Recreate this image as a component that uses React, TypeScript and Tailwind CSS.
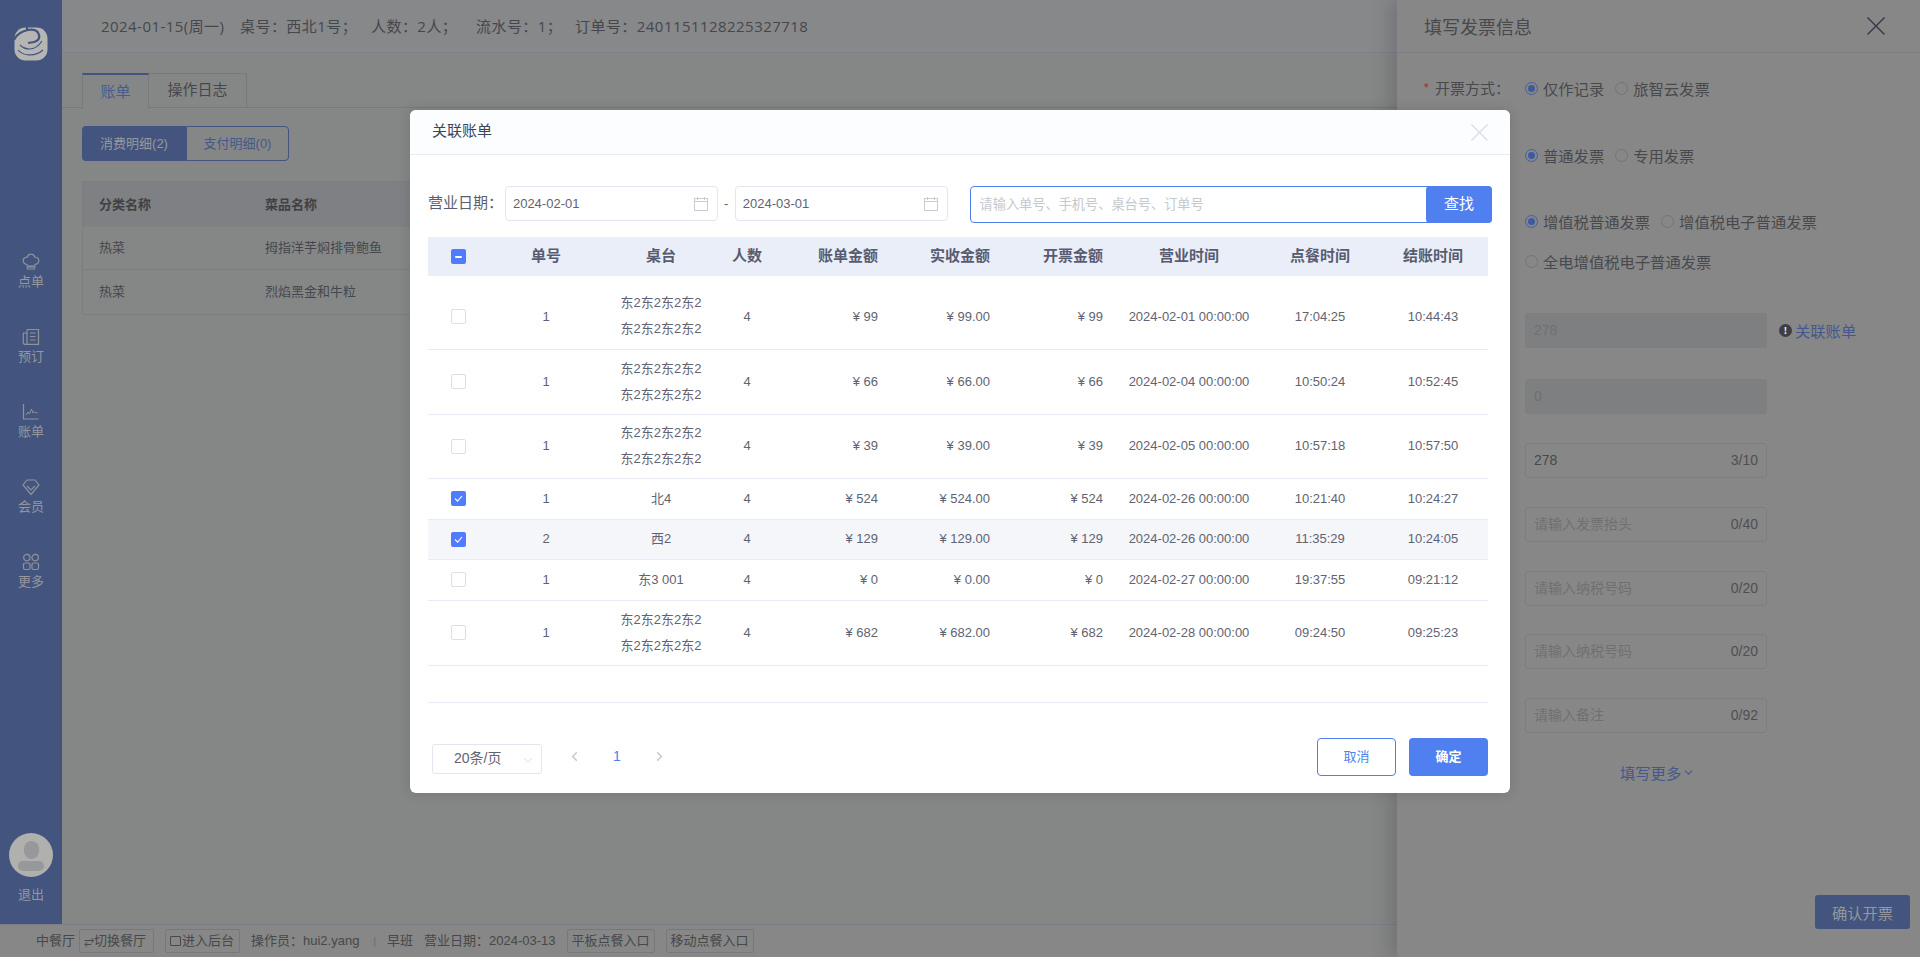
import React from 'react';
import { ChevronDown, ChevronLeft, ChevronRight } from 'lucide-react';

interface Bill {
  no: number;
  table: string[];
  amount: string;
  received: string;
  bizTime: string;
  orderTime: string;
  payTime: string;
  rowClass: string;
  checked?: boolean;
  active?: boolean;
}

const east = '东2东2东2东2';

const bills: Bill[] = [
  { no: 1, table: [east, east], amount: '99', received: '99.00', bizTime: '2024-02-01 00:00:00', orderTime: '17:04:25', payTime: '10:44:43', rowClass: 'h-[73px]' },
  { no: 1, table: [east, east], amount: '66', received: '66.00', bizTime: '2024-02-04 00:00:00', orderTime: '10:50:24', payTime: '10:52:45', rowClass: 'h-[65px]' },
  { no: 1, table: [east, east], amount: '39', received: '39.00', bizTime: '2024-02-05 00:00:00', orderTime: '10:57:18', payTime: '10:57:50', rowClass: 'h-[64px]' },
  { no: 1, table: ['北4'], amount: '524', received: '524.00', bizTime: '2024-02-26 00:00:00', orderTime: '10:21:40', payTime: '10:24:27', rowClass: 'h-[41px]', checked: true },
  { no: 2, table: ['西2'], amount: '129', received: '129.00', bizTime: '2024-02-26 00:00:00', orderTime: '11:35:29', payTime: '10:24:05', rowClass: 'h-[40px]', checked: true, active: true },
  { no: 1, table: ['东3 001'], amount: '0', received: '0.00', bizTime: '2024-02-27 00:00:00', orderTime: '19:37:55', payTime: '09:21:12', rowClass: 'h-[41px]' },
  { no: 1, table: [east, east], amount: '682', received: '682.00', bizTime: '2024-02-28 00:00:00', orderTime: '09:24:50', payTime: '09:25:23', rowClass: 'h-[65px]' },
];

function Logo() {
  return (
    <svg width="34" height="34" viewBox="0 0 34 34" fill="none">
      <rect x="0.5" y="0.5" width="33" height="33" rx="11" fill="#b5b5b3" />
      <path d="M13 -1v5M0 13C3 7 8 4 14 3c6-1 10 1 11 5 1 4-2 6-5 7l-6 1" stroke="#43557f" strokeWidth="2.2" />
      <path d="M4 23c4 5 16 8 25 0M6 18c4 4 14 8 22-4" stroke="#43557f" strokeWidth="1.2" />
    </svg>
  );
}

function NavIcon({ name }: { name: string }) {
  const common = { width: 18, height: 18, viewBox: '0 0 18 18', fill: 'none', stroke: '#8f9399', strokeWidth: 1.2 };
  if (name === 'hat') {
    return (
      <svg {...common}>
        <path d="M5 11.5C2.8 11 1.2 9.5 1.2 7.5 1.2 5.4 3 4 5 4.3 5.6 2.4 7.2 1.2 9 1.2s3.4 1.2 4 3.1c2-.3 3.8 1.1 3.8 3.2 0 2-1.6 3.5-3.8 4L12.5 16h-7L5 11.5Z" />
        <path d="M6 13.5h6" strokeWidth="2" />
      </svg>
    );
  }
  if (name === 'book') {
    return (
      <svg {...common}>
        <path d="M5 1.5h11.5v14.8H3c-1 0-1.7-.7-1.7-1.7V5H5" />
        <path d="M5 1.5v14.8M8 5h5.5M8 8.5h5.5M8 12h5.5" />
      </svg>
    );
  }
  if (name === 'chart') {
    return (
      <svg {...common}>
        <path d="M1.5 1v15h15" />
        <path d="M4 12l2-3 1.5 2 2-5 1.5 4 1.5-1 3 1" strokeWidth="1" />
      </svg>
    );
  }
  if (name === 'gem') {
    return (
      <svg {...common}>
        <path d="M5 2h8l4 5-8 9.5L1 7l4-5Z" />
        <path d="M5 8l4 4 4-4" />
      </svg>
    );
  }
  return (
    <svg {...common}>
      <circle cx="4.8" cy="4.6" r="3.2" />
      <circle cx="13.2" cy="4.6" r="3.2" />
      <rect x="1.5" y="10" width="6.5" height="6.5" rx="1.5" />
      <rect x="10" y="10" width="6.5" height="6.5" rx="1.5" />
    </svg>
  );
}

function CloseIcon({ size, color, width }: { size: number; color: string; width: number }) {
  return (
    <svg width={size} height={size} viewBox="0 0 18 18" fill="none" stroke={color} strokeWidth={width}>
      <path d="M0.5 0.5l17 17M17.5 0.5l-17 17" />
    </svg>
  );
}

function Sidebar() {
  const items = [
    { icon: 'hat', label: '点单' },
    { icon: 'book', label: '预订' },
    { icon: 'chart', label: '账单' },
    { icon: 'gem', label: '会员' },
    { icon: 'grid', label: '更多' },
  ];
  return (
    <aside className="w-[62px] shrink-0 bg-[#43557f] flex flex-col items-center text-[13px] text-[#94979c]">
      <div className="mt-[27px]">
        <Logo />
      </div>
      <nav className="mt-[192px] flex flex-col items-center gap-[31px]">
        {items.map((it) => (
          <div key={it.label} className="h-[44px] flex flex-col items-center">
            <NavIcon name={it.icon} />
            <span className="mt-[1px] leading-[20px]">{it.label}</span>
          </div>
        ))}
      </nav>
      <div className="mt-auto mb-[19px] flex flex-col items-center">
        <div className="w-[44px] h-[44px] rounded-full bg-[#b0b0af] flex flex-col items-center overflow-hidden">
          <div className="mt-[8px] w-[15px] h-[18px] rounded-full bg-[#979899]" />
          <div className="mt-[2px] w-[26px] h-[10px] rounded-full bg-[#979899]" />
        </div>
        <span className="mt-[8px] leading-[20px]">退出</span>
      </div>
    </aside>
  );
}

function BackPage() {
  return (
    <main className="flex-1 min-w-0 flex flex-col bg-[#858786] text-[#46474d]">
      <header className="h-[53px] shrink-0 flex items-center pl-[39px] text-[15px] tracking-[0.45px] border-b border-[#7f8189] bg-[#87888a] font-['Open_Sans','Noto_Sans_CJK_SC',sans-serif]">
        <span className="w-[139px]">2024-01-15(周一)</span>
        <span className="w-[131px]">桌号：西北1号；</span>
        <span className="w-[105px]">人数：2人；</span>
        <span className="w-[99px]">流水号：1；</span>
        <span>订单号：2401151128225327718</span>
      </header>
      <div className="px-[20px] pt-[20px]">
        <div className="flex h-[35px] text-[15px] border-b border-[#78797c] -mx-[20px] px-[20px]">
          <div className="w-[67px] h-[36px] border-t-2 border-[#43557f] border-l border-r border-l-[#78797c] border-r-[#78797c] bg-[#858786] text-[#4a5b8f] flex items-center justify-center">账单</div>
          <div className="w-[98px] border-t border-r border-[#78797c] flex items-center justify-center">操作日志</div>
        </div>
        <div className="mt-[18px] flex w-[207px] h-[35px] text-[13px]">
          <div className="w-[104px] rounded-l-[4px] bg-[#43557f] text-[#969899] flex items-center justify-center">消费明细(2)</div>
          <div className="flex-1 rounded-r-[4px] border border-[#43557f] text-[#46588a] flex items-center justify-center">支付明细(0)</div>
        </div>
        <div className="mt-[20px] border border-[#7b7d80] rounded-[2px] text-[13px]">
          <div className="h-[45px] bg-[#7e8083] flex items-center font-bold text-[#3f4044]">
            <span className="w-[182px] pl-[16px]">分类名称</span>
            <span>菜品名称</span>
          </div>
          <div className="h-[43px] border-b border-[#7b7d80] flex items-center">
            <span className="w-[182px] pl-[16px]">热菜</span>
            <span>拇指洋芋焖排骨鲍鱼</span>
          </div>
          <div className="h-[44px] flex items-center">
            <span className="w-[182px] pl-[16px]">热菜</span>
            <span>烈焰黑金和牛粒</span>
          </div>
        </div>
      </div>
    </main>
  );
}

function BottomBar() {
  const btn = 'h-[24px] px-[4px] border border-[#77787b] rounded-[2px] flex items-center';
  return (
    <footer className="h-[33px] shrink-0 border-t border-[#7c7e85] bg-[#868786] flex items-center pl-[36px] text-[13px] text-[#47484b] font-['Liberation_Sans','Noto_Sans_CJK_SC',sans-serif]">
      <span>中餐厅</span>
      <div className={`${btn} ml-[4px] w-[75px]`}>⥂切换餐厅</div>
      <div className={`${btn} ml-[11px] w-[75px]`}>
        <span className="w-[11px] h-[10px] border border-[#47484b] rounded-[1px] mr-[1px]" />进入后台
      </div>
      <span className="ml-[11px]">操作员：hui2.yang</span>
      <span className="ml-[14px] text-[10px] text-[#6c6d70]">|</span>
      <span className="ml-[11px]">早班</span>
      <span className="ml-[11px]">营业日期：2024-03-13</span>
      <div className={`${btn} ml-[11px] w-[88px]`}>平板点餐入口</div>
      <div className={`${btn} ml-[11px] w-[88px]`}>移动点餐入口</div>
    </footer>
  );
}

function Radio({ checked, label }: { checked?: boolean; label: string }) {
  return (
    <span className="flex items-center">
      <span className={`w-[13px] h-[13px] rounded-full border flex items-center justify-center ${checked ? 'border-[#43609f]' : 'border-[#737477]'}`}>
        {checked && <span className="w-[7px] h-[7px] rounded-full bg-[#3f5a9c]" />}
      </span>
      <span className="ml-[5px]">{label}</span>
    </span>
  );
}

function FieldBox({ value, placeholder, count, disabled, className }: { value?: string; placeholder?: string; count?: string; disabled?: boolean; className?: string }) {
  return (
    <div className={`w-[242px] h-[35px] rounded-[3px] border border-[#7d7e80] px-[8px] flex items-center justify-between text-[14px] font-['Liberation_Sans','Noto_Sans_CJK_SC',sans-serif] ${disabled ? 'bg-[#7e7f81]' : ''} ${className ?? ''}`}>
      <span className={disabled || placeholder ? 'text-[#6f7072]' : 'text-[#47484b]'}>{value ?? placeholder}</span>
      {count && <span className="text-[#4e4f53]">{count}</span>}
    </div>
  );
}

function InvoiceDrawer() {
  return (
    <section className="absolute right-0 top-0 bottom-0 w-[523px] bg-[#878787] text-[15.3px] text-[#48494c] shadow-[-8px_0_16px_rgba(60,62,70,0.25)] font-['Noto_Sans_CJK_SC',sans-serif]">
      <div className="h-[53px] border-b border-[#7d7e85] pl-[27px] pr-[35px] flex items-center justify-between">
        <span className="text-[18px]">填写发票信息</span>
        <CloseIcon size={18} color="#35364a" width={1.4} />
      </div>
      <div className="pl-[26px] pt-[24px]">
        <div className="flex items-center h-[22px]">
          <span className="w-[12px] text-[#9c3b30] text-[14px]">*</span>
          <span className="w-[90px] text-[15px]">开票方式：</span>
          <div className="flex gap-[11px]">
            <Radio checked label="仅作记录" />
            <Radio label="旅智云发票" />
          </div>
        </div>
        <div className="flex gap-[11px] ml-[102px] mt-[45px] h-[22px] items-center">
          <Radio checked label="普通发票" />
          <Radio label="专用发票" />
        </div>
        <div className="flex gap-[11px] ml-[102px] mt-[44px] h-[22px] items-center">
          <Radio checked label="增值税普通发票" />
          <Radio label="增值税电子普通发票" />
        </div>
        <div className="flex ml-[102px] mt-[18px] h-[22px] items-center">
          <Radio label="全电增值税电子普通发票" />
        </div>
        <div className="ml-[102px] mt-[41px] flex items-center">
          <FieldBox value="278" disabled />
          <span className="ml-[12px] w-[13px] h-[13px] rounded-full bg-[#3e3f45] text-white text-[9px] font-bold flex items-center justify-center">!</span>
          <span className="ml-[3px] text-[#45578c]">关联账单</span>
        </div>
        <div className="ml-[102px]">
          <FieldBox value="0" disabled className="mt-[31px]" />
          <FieldBox value="278" count="3/10" className="mt-[29px]" />
          <FieldBox placeholder="请输入发票抬头" count="0/40" className="mt-[29px]" />
          <FieldBox placeholder="请输入纳税号码" count="0/20" className="mt-[29px]" />
          <FieldBox placeholder="请输入纳税号码" count="0/20" className="mt-[28px]" />
          <FieldBox placeholder="请输入备注" count="0/92" className="mt-[29px]" />
          <div className="mt-[28px] pl-[95px] flex items-center text-[#45578c]">
            填写更多<ChevronDown size={13} className="ml-[1px]" />
          </div>
        </div>
      </div>
      <div className="absolute right-[10px] bottom-[28px] w-[95px] h-[34px] rounded-[3px] bg-[#43557f] text-[#95979a] flex items-center justify-center">确认开票</div>
    </section>
  );
}

function Check({ state }: { state?: 'on' | 'some' }) {
  if (!state) return <span className="block mx-auto w-[15px] h-[15px] rounded-[2px] border border-[#dcdfe6] bg-white" />;
  return (
    <span className="mx-auto w-[15px] h-[15px] rounded-[2px] bg-[#4f7cff] flex items-center justify-center">
      {state === 'some' ? (
        <span className="w-[7px] h-[2px] bg-white rounded-[1px]" />
      ) : (
        <svg width="11" height="11" viewBox="0 0 11 11" fill="none" stroke="#fff" strokeWidth="1.1">
          <path d="M2 5.5l2.6 2.6L9 3" />
        </svg>
      )}
    </span>
  );
}

function DateBox({ value }: { value: string }) {
  return (
    <div className="w-[213px] h-[35px] rounded-[4px] border border-[#e3e6ee] pl-[7px] pr-[9px] flex items-center justify-between text-[13px]">
      <span>{value}</span>
      <svg width="14" height="14" viewBox="0 0 14 14" fill="none" stroke="#c9ccd4">
        <rect x="0.5" y="1.5" width="13" height="12" />
        <path d="M0.5 4.5h13M3.5 0v3M10.5 0v3" />
      </svg>
    </div>
  );
}

function BillModal() {
  const th = 'font-bold text-[15px] text-[#585c70] px-0';
  return (
    <section className="absolute left-[410px] top-[110px] w-[1100px] h-[683px] rounded-[6px] bg-white text-[#5f6372] shadow-[0_0_12px_rgba(50,52,60,0.2)] font-['Liberation_Sans','Noto_Sans_CJK_SC',sans-serif]">
      <div className="h-[45px] rounded-t-[6px] bg-[#fcfdff] border-b border-[#e9edf3] pl-[22px] pr-[22px] flex items-center justify-between">
        <span className="text-[15px] text-[#40435a] -mt-[2px]">关联账单</span>
        <CloseIcon size={17} color="#d9dce6" width={1.3} />
      </div>
      <div className="pl-[18px] pr-[18px] pt-[31px]">
        <div className="flex items-start h-[36px]">
          <span className="w-[77px] h-[35px] flex items-center text-[15px] text-[#5a5e6d] whitespace-nowrap">营业日期：</span>
          <DateBox value="2024-02-01" />
          <span className="w-[17px] h-[35px] flex items-center justify-center text-[13px]">-</span>
          <DateBox value="2024-03-01" />
          <div className="ml-[22px] w-[523px] h-[37px] rounded-[4px] border border-[#4f7fef] flex items-center">
            <span className="flex-1 pl-[9px] text-[13.2px] text-[#c5c8cf]">请输入单号、手机号、桌台号、订单号</span>
            <div className="w-[66px] h-[37px] -mr-px rounded-[4px] bg-[#5080ef] text-white text-[15px] flex items-center justify-center">查找</div>
          </div>
        </div>
        <table className="mt-[15px] w-[1060px] table-fixed border-collapse text-[13px]">
          <colgroup>
            <col className="w-[60px]" />
            <col className="w-[116px]" />
            <col className="w-[114px]" />
            <col className="w-[58px]" />
            <col className="w-[115px]" />
            <col className="w-[112px]" />
            <col className="w-[113px]" />
            <col className="w-[146px]" />
            <col className="w-[116px]" />
            <col className="w-[110px]" />
          </colgroup>
          <thead>
            <tr className="h-[39px] bg-[#eaeef9]">
              <th><Check state="some" /></th>
              <th className={th}>单号</th>
              <th className={th}>桌台</th>
              <th className={th}>人数</th>
              <th className={`${th} text-right pr-[13px]`}>账单金额</th>
              <th className={`${th} text-right pr-[13px]`}>实收金额</th>
              <th className={`${th} text-right pr-[13px]`}>开票金额</th>
              <th className={th}>营业时间</th>
              <th className={th}>点餐时间</th>
              <th className={th}>结账时间</th>
            </tr>
          </thead>
          <tbody>
            {bills.map((b, i) => {
              const top = i === 0 ? 'pt-[8px]' : '';
              return (
                <tr key={i} className={`border-b border-[#e9ebf2] ${b.active ? 'bg-[#f4f6fa]' : ''} ${b.rowClass}`}>
                  <td className={top}><Check state={b.checked ? 'on' : undefined} /></td>
                  <td className={`text-center ${top}`}>{b.no}</td>
                  <td className={`text-center leading-[26px] ${top}`}>
                    {b.table.map((t, j) => (
                      <div key={j}>{t}</div>
                    ))}
                  </td>
                  <td className={`text-center ${top}`}>4</td>
                  <td className={`text-right pr-[13px] ${top}`}>¥ {b.amount}</td>
                  <td className={`text-right pr-[13px] ${top}`}>¥ {b.received}</td>
                  <td className={`text-right pr-[13px] ${top}`}>¥ {b.amount}</td>
                  <td className={`text-center ${top}`}>{b.bizTime}</td>
                  <td className={`text-center ${top}`}>{b.orderTime}</td>
                  <td className={`text-center ${top}`}>{b.payTime}</td>
                </tr>
              );
            })}
            <tr className="h-[37px] border-b border-[#e9ebf2]">
              <td colSpan={10} />
            </tr>
          </tbody>
        </table>
        <div className="mt-[35px] w-[1060px] flex items-center">
          <div className="ml-[4px] w-[110px] h-[30px] mt-[4px] rounded-[3px] border border-[#e3e6ee] pl-[21px] pr-[6px] flex items-center justify-between text-[14px]">
            <span>20条/页</span>
            <ChevronDown size={14} strokeWidth={1} className="text-[#c5c8d0] mt-[2px]" />
          </div>
          <ChevronLeft size={15} strokeWidth={2.4} className="ml-[25px] text-[#c5c8d0]" />
          <span className="ml-[31px] text-[14px] text-[#4f7fef]">1</span>
          <ChevronRight size={15} strokeWidth={2.4} className="ml-[31px] text-[#c5c8d0]" />
          <div className="ml-auto w-[79px] h-[38px] rounded-[4px] border border-[#4f7fef] text-[#4f7fef] text-[13px] flex items-center justify-center">取消</div>
          <div className="ml-[13px] w-[79px] h-[38px] rounded-[4px] bg-[#5080ef] text-white text-[13px] font-bold flex items-center justify-center">确定</div>
        </div>
      </div>
    </section>
  );
}

export default function App() {
  return (
    <div className="relative w-[1920px] h-[957px] overflow-hidden flex flex-col bg-[#858786] font-['Liberation_Sans','Noto_Sans_CJK_SC',sans-serif]">
      <div className="flex-1 min-h-0 flex">
        <Sidebar />
        <BackPage />
      </div>
      <BottomBar />
      <InvoiceDrawer />
      <BillModal />
    </div>
  );
}
